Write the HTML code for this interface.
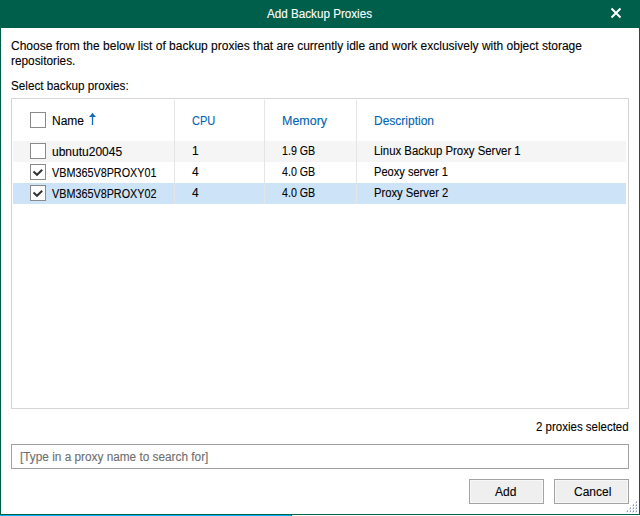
<!DOCTYPE html>
<html>
<head>
<meta charset="utf-8">
<style>
html,body{margin:0;padding:0;}
body{width:640px;height:516px;position:relative;overflow:hidden;background:#fff;font-family:"Liberation Sans",sans-serif;font-size:12px;color:#000;}
.a{position:absolute;}
.t{position:absolute;white-space:nowrap;line-height:15px;transform-origin:0 0;-webkit-text-stroke:0.1px currentColor;}
#title{left:0;top:0;width:640px;height:28px;background:#005f4b;}
#bl{left:0;top:28px;width:1px;height:487px;background:#005f4b;}
#br{left:639px;top:28px;width:1px;height:487px;background:#005f4b;}
#bb{left:0;top:514px;width:640px;height:1px;background:#005f4b;}
#task{left:0;top:515px;width:291px;height:1px;background:#00b7f5;border-right:1px solid #0b5a48;}
#tbl{left:11px;top:98px;width:616px;height:309px;border:1px solid #d5d5d5;}
.sep{position:absolute;width:1px;background:#e5e5e5;top:100px;height:104px;}
.row{position:absolute;left:13px;width:613px;height:21px;}
.cb{position:absolute;left:30px;width:14px;height:14px;border:1px solid #8a8a8a;background:#fff;}
.hd{color:#0063b1;}
.btn{position:absolute;top:479px;width:73px;height:23px;border:1px solid #a3a3a3;background:#efefef;box-shadow:inset 0 0 0 1px #f8f8f8;}
.dot{position:absolute;width:1px;height:2px;background:linear-gradient(#b9c2da 50%,#8d9abd 50%);box-shadow:-1px 1px 0 #e6e9f1;}
</style>
</head>
<body>
<div class="a" id="title"></div>
<div class="t" style="transform:scaleX(0.972);left:267px;top:7px;color:#fff;">Add Backup Proxies</div>
<svg class="a" style="left:0;top:0" width="640" height="28">
  <path d="M611.5 8.5 L620.5 17.5 M620.5 8.5 L611.5 17.5" stroke="#fff" stroke-width="2" fill="none"/>
</svg>
<div class="a" id="bl"></div>
<div class="a" id="br"></div>
<div class="a" id="bb"></div>
<div class="a" id="task"></div>

<div class="t" style="left:11px;top:39px;">Choose from the below list of backup proxies that are currently idle and work exclusively with object storage</div>
<div class="t" style="transform:scaleX(0.984);left:11px;top:54px;">repositories.</div>
<div class="t" style="transform:scaleX(0.975);left:11px;top:79px;">Select backup proxies:</div>

<div class="a" id="tbl"></div>
<div class="row" style="top:141px;background:#f5f5f5;"></div>
<div class="row" style="top:183px;background:#cde3f7;"></div>
<div class="sep" style="left:174px;"></div>
<div class="sep" style="left:264px;"></div>
<div class="sep" style="left:356px;"></div>

<div class="cb" style="top:112px;"></div>
<div class="t" style="left:52px;top:114px;">Name</div>
<svg class="a" style="left:86px;top:110px" width="14" height="18">
  <path d="M6.5 3.5 L6.5 15" stroke="#0f6cbd" stroke-width="1.3" fill="none"/>
  <path d="M3 7 L6.5 3 L10 7 Z" fill="#0f6cbd"/>
</svg>
<div class="t hd" style="transform:scaleX(0.917);left:192px;top:114px;">CPU</div>
<div class="t hd" style="transform:scaleX(1.04);left:282px;top:114px;">Memory</div>
<div class="t hd" style="left:374px;top:114px;">Description</div>

<div class="cb" style="top:143px;"></div>
<div class="t" style="left:52px;top:145px;">ubnutu20045</div>
<div class="t" style="left:192px;top:144px;">1</div>
<div class="t" style="transform:scaleX(0.889);left:282px;top:144px;">1.9 GB</div>
<div class="t" style="transform:scaleX(0.948);left:374px;top:144px;">Linux Backup Proxy Server 1</div>

<div class="cb" style="top:164px;"></div>
<svg class="a" style="left:30px;top:164px" width="16" height="16"><path d="M3.5 7.5 L7 10.8 L12.2 5.8" stroke="#333" stroke-width="2" fill="none"/></svg>
<div class="t" style="transform:scaleX(0.9);left:52px;top:166px;">VBM365V8PROXY01</div>
<div class="t" style="left:192px;top:165px;">4</div>
<div class="t" style="transform:scaleX(0.889);left:282px;top:165px;">4.0 GB</div>
<div class="t" style="transform:scaleX(0.924);left:374px;top:165px;">Peoxy server 1</div>

<div class="cb" style="top:185px;"></div>
<svg class="a" style="left:30px;top:185px" width="16" height="16"><path d="M3.5 7.5 L7 10.8 L12.2 5.8" stroke="#333" stroke-width="2" fill="none"/></svg>
<div class="t" style="transform:scaleX(0.9);left:52px;top:187px;">VBM365V8PROXY02</div>
<div class="t" style="left:192px;top:186px;">4</div>
<div class="t" style="transform:scaleX(0.889);left:282px;top:186px;">4.0 GB</div>
<div class="t" style="transform:scaleX(0.936);left:374px;top:186px;">Proxy Server 2</div>

<div class="t" style="transform:scaleX(0.958);left:536px;top:420px;">2 proxies selected</div>

<div class="a" style="left:11px;top:444px;width:616px;height:23px;border:1px solid #a0a0a0;"></div>
<div class="t" style="transform:scaleX(0.984);left:20px;top:450px;color:#6d6d6d;">[Type in a proxy name to search for]</div>

<div class="btn" style="left:469px;"></div>
<div class="t" style="left:495px;top:485px;">Add</div>
<div class="btn" style="left:554px;"></div>
<div class="t" style="left:574px;top:485px;">Cancel</div>

<div class="dot" style="left:636px;top:501px"></div>
<div class="dot" style="left:633px;top:504px"></div><div class="dot" style="left:636px;top:504px"></div>
<div class="dot" style="left:630px;top:507px"></div><div class="dot" style="left:633px;top:507px"></div><div class="dot" style="left:636px;top:507px"></div>
<div class="dot" style="left:627px;top:510px"></div><div class="dot" style="left:630px;top:510px"></div><div class="dot" style="left:633px;top:510px"></div><div class="dot" style="left:636px;top:510px"></div>
</body>
</html>
